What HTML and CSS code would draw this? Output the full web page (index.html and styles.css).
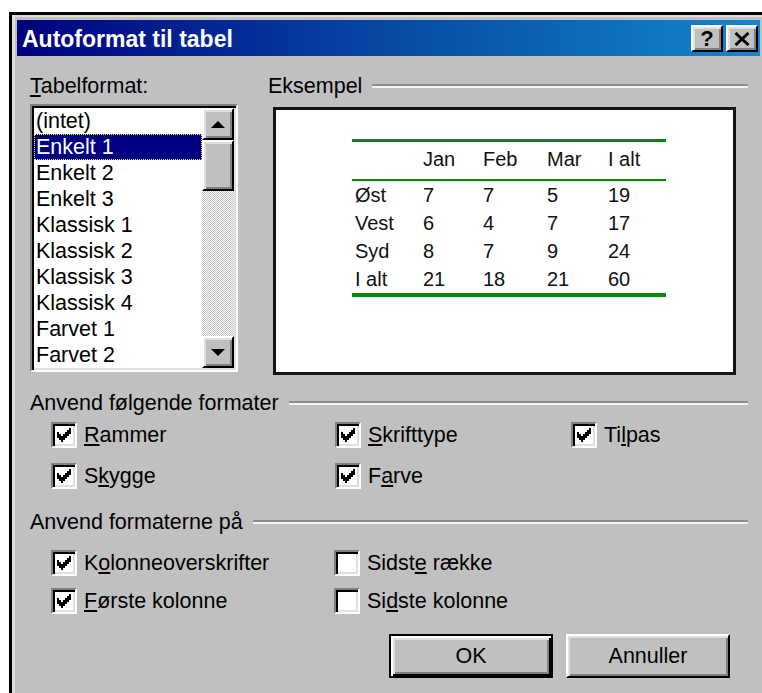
FILE: index.html
```html
<!DOCTYPE html>
<html lang="da">
<head>
<meta charset="utf-8">
<title>Autoformat til tabel</title>
<link rel="stylesheet" href="styles.css">
</head>
<body>
<div class="window">
  <div class="frame">
    <div class="titlebar">
      <span class="title">Autoformat til tabel</span>
      <div class="title-buttons">
        <button class="tbtn raised help" type="button">?</button>
        <button class="tbtn raised close" type="button">
          <svg width="16" height="14" viewBox="0 0 16 14"><path d="M1.5 1 L14.5 13 M14.5 1 L1.5 13" stroke="#000" stroke-width="3" fill="none"/></svg>
        </button>
      </div>
    </div>

    <div class="body">
      <div class="top">
        <div class="format-col">
          <div class="label"><u>T</u>abelformat:</div>
          <div class="listbox sunken">
            <ul class="items">
              <li>(intet)</li>
              <li class="selected">Enkelt 1</li>
              <li>Enkelt 2</li>
              <li>Enkelt 3</li>
              <li>Klassisk 1</li>
              <li>Klassisk 2</li>
              <li>Klassisk 3</li>
              <li>Klassisk 4</li>
              <li>Farvet 1</li>
              <li>Farvet 2</li>
            </ul>
            <div class="scrollbar">
              <div class="sb-btn raised">
                <svg width="14" height="7" viewBox="0 0 14 7"><polygon points="7,0 14,7 0,7" fill="#000"/></svg>
              </div>
              <div class="sb-thumb raised"></div>
              <div class="sb-track"></div>
              <div class="sb-btn raised">
                <svg width="14" height="7" viewBox="0 0 14 7"><polygon points="0,0 14,0 7,7" fill="#000"/></svg>
              </div>
            </div>
          </div>
        </div>

        <div class="preview-col">
          <div class="group-head"><span>Eksempel</span><span class="rule"></span></div>
          <div class="preview">
            <div class="sample">
              <div class="srow head"><span></span><span>Jan</span><span>Feb</span><span>Mar</span><span>I alt</span></div>
              <div class="srow"><span>Øst</span><span>7</span><span>7</span><span>5</span><span>19</span></div>
              <div class="srow"><span>Vest</span><span>6</span><span>4</span><span>7</span><span>17</span></div>
              <div class="srow"><span>Syd</span><span>8</span><span>7</span><span>9</span><span>24</span></div>
              <div class="srow"><span>I alt</span><span>21</span><span>18</span><span>21</span><span>60</span></div>
            </div>
          </div>
        </div>
      </div>

      <div class="group-head section formats-head"><span>Anvend følgende formater</span><span class="rule"></span></div>
      <div class="checks formats">
        <label class="check"><span class="cb on"><svg width="18" height="18" viewBox="0 0 9 9" shape-rendering="crispEdges"><path d="M1 3h1v3H1z M2 4h1v3H2z M3 5h1v3H3z M4 4h1v3H4z M5 3h1v3H5z M6 2h1v3H6z M7 1h1v3H7z" fill="#000"/></svg></span><span><u>R</u>ammer</span></label>
        <label class="check"><span class="cb on"><svg width="18" height="18" viewBox="0 0 9 9" shape-rendering="crispEdges"><path d="M1 3h1v3H1z M2 4h1v3H2z M3 5h1v3H3z M4 4h1v3H4z M5 3h1v3H5z M6 2h1v3H6z M7 1h1v3H7z" fill="#000"/></svg></span><span><u>S</u>krifttype</span></label>
        <label class="check"><span class="cb on"><svg width="18" height="18" viewBox="0 0 9 9" shape-rendering="crispEdges"><path d="M1 3h1v3H1z M2 4h1v3H2z M3 5h1v3H3z M4 4h1v3H4z M5 3h1v3H5z M6 2h1v3H6z M7 1h1v3H7z" fill="#000"/></svg></span><span>Ti<u>l</u>pas</span></label>
        <label class="check"><span class="cb on"><svg width="18" height="18" viewBox="0 0 9 9" shape-rendering="crispEdges"><path d="M1 3h1v3H1z M2 4h1v3H2z M3 5h1v3H3z M4 4h1v3H4z M5 3h1v3H5z M6 2h1v3H6z M7 1h1v3H7z" fill="#000"/></svg></span><span>S<u>k</u>ygge</span></label>
        <label class="check"><span class="cb on"><svg width="18" height="18" viewBox="0 0 9 9" shape-rendering="crispEdges"><path d="M1 3h1v3H1z M2 4h1v3H2z M3 5h1v3H3z M4 4h1v3H4z M5 3h1v3H5z M6 2h1v3H6z M7 1h1v3H7z" fill="#000"/></svg></span><span>F<u>a</u>rve</span></label>
      </div>

      <div class="group-head section apply-head"><span>Anvend formaterne på</span><span class="rule"></span></div>
      <div class="checks apply">
        <label class="check"><span class="cb on"><svg width="18" height="18" viewBox="0 0 9 9" shape-rendering="crispEdges"><path d="M1 3h1v3H1z M2 4h1v3H2z M3 5h1v3H3z M4 4h1v3H4z M5 3h1v3H5z M6 2h1v3H6z M7 1h1v3H7z" fill="#000"/></svg></span><span>K<u>o</u>lonneoverskrifter</span></label>
        <label class="check"><span class="cb"></span><span>Sidst<u>e</u> række</span></label>
        <label class="check"><span class="cb on"><svg width="18" height="18" viewBox="0 0 9 9" shape-rendering="crispEdges"><path d="M1 3h1v3H1z M2 4h1v3H2z M3 5h1v3H3z M4 4h1v3H4z M5 3h1v3H5z M6 2h1v3H6z M7 1h1v3H7z" fill="#000"/></svg></span><span><u>F</u>ørste kolonne</span></label>
        <label class="check"><span class="cb"></span><span>Si<u>d</u>ste kolonne</span></label>
      </div>

      <div class="actions">
        <button class="btn default" type="button">OK</button>
        <button class="btn raised" type="button">Annuller</button>
      </div>
    </div>
  </div>
</div>
</body>
</html>
```

FILE: styles.css
```css
html, body {
  margin: 0;
  height: 100%;
  overflow: hidden;
  background: #fff;
}

body {
  font-family: "Liberation Sans", Arial, sans-serif;
  font-size: 21.5px;
  line-height: 26px;
  color: #000;
}

u { text-decoration-thickness: 2px; text-underline-offset: 2px; }

/* Window chrome */
.window {
  margin: 12px 0 0 9px;
  width: 753px;
  height: 700px;
  box-sizing: border-box;
  border-left: 3px solid #000;
  border-top: 3px solid #000;
}

.frame {
  height: 100%;
  box-sizing: border-box;
  background: #c0c0c0;
  border-left: 3px solid #dfdfdf;
  border-top: 2px solid #dfdfdf;
  padding: 3px 2px 0 2px;
}

.titlebar {
  display: flex;
  align-items: flex-start;
  height: 36px;
  box-sizing: border-box;
  padding: 5px 2px 0 5px;
  background: linear-gradient(to right, #000080 0%, #0850a8 55%, #1286d2 100%);
}

.title {
  margin-top: 1px;
  color: #fff;
  font-weight: bold;
  font-size: 23px;
  line-height: 26px;
  white-space: nowrap;
}

.title-buttons {
  margin-left: auto;
  display: flex;
  gap: 3px;
}

/* 3D bevels */
.raised {
  background: #c0c0c0;
  border: 2px solid;
  border-color: #fff #000 #000 #fff;
  box-shadow: inset 2px 2px #dfdfdf, inset -2px -2px #808080;
}

.sunken {
  border: 2px solid;
  border-color: #808080 #fff #fff #808080;
  box-shadow: inset 2px 2px #000, inset -2px -2px #dfdfdf;
}

.tbtn {
  width: 32px;
  height: 27px;
  box-sizing: border-box;
  padding: 0;
  margin: 0;
  display: flex;
  align-items: center;
  justify-content: center;
  font-family: inherit;
  color: #000;
}

.help {
  font-weight: bold;
  font-size: 22px;
  line-height: 20px;
}

/* Dialog body */
.body {
  padding: 17px 12px 0 13px;
}

.top {
  display: flex;
  gap: 30px;
}

.format-col {
  width: 208px;
  flex: none;
}

.label {
  height: 26px;
  white-space: nowrap;
}

.listbox {
  margin-top: 5px;
  width: 208px;
  height: 268px;
  box-sizing: border-box;
  padding: 2px;
  background: #fff;
  display: flex;
}

.items {
  flex: 1;
  margin: 0;
  padding: 0;
  list-style: none;
  overflow: hidden;
}

.items li {
  height: 26px;
  padding-left: 2px;
  white-space: nowrap;
}

.items li.selected {
  background: #000080;
  color: #fff;
  outline: 1px dotted #f0f060;
  outline-offset: -1px;
}

.scrollbar {
  width: 32px;
  display: flex;
  flex-direction: column;
}

.sb-btn {
  height: 32px;
  box-sizing: border-box;
  display: flex;
  align-items: center;
  justify-content: center;
}

.sb-btn svg { display: block; }

.sb-thumb {
  height: 51px;
  box-sizing: border-box;
}

.sb-track {
  flex: 1;
  background: repeating-conic-gradient(#c0c0c0 0% 25%, #fff 0% 50%) 0 0 / 2px 2px;
}

.preview-col {
  flex: 1;
}

.group-head {
  display: flex;
  align-items: center;
  gap: 10px;
  height: 26px;
  white-space: nowrap;
}

.rule {
  flex: 1;
  height: 0;
  border-top: 2px solid #8c8c8c;
  border-bottom: 2px solid #f4f4f4;
}

.preview {
  margin: 8px 0 0 5px;
  width: 463px;
  height: 268px;
  box-sizing: border-box;
  background: #fff;
  border: 3px solid #141414;
}

/* Sample table drawn in the preview */
.sample {
  margin: 29px 0 0 76px;
  width: 314px;
  font-size: 20px;
  line-height: 28px;
  color: #111;
  border-top: 3px solid #058a05;
  border-bottom: 4px solid #058a05;
}

.srow {
  display: grid;
  grid-template-columns: 68px 60px 64px 61px 61px;
}

.srow span {
  padding-left: 3px;
  white-space: nowrap;
}

.srow.head {
  padding: 3px 0 6px;
  border-bottom: 2px solid #058a05;
}

/* Option groups */
.section { margin-top: 15px; }
.apply-head { margin-top: 20px; }

.checks {
  display: grid;
  grid-template-columns: 284px 236px auto;
  padding-left: 21px;
  margin-top: 6px;
  row-gap: 15px;
}

.checks.apply {
  grid-template-columns: 283px auto;
  margin-top: 15px;
  row-gap: 12px;
}

.check {
  display: flex;
  align-items: center;
  gap: 7px;
  white-space: nowrap;
}

.cb {
  width: 26px;
  height: 26px;
  box-sizing: border-box;
  background: #fff;
  border: 2px solid;
  border-color: #808080 #fff #fff #808080;
  box-shadow: inset 2px 2px #000, inset -2px -2px #dfdfdf;
  display: flex;
  align-items: center;
  justify-content: center;
  flex: none;
}

.cb svg { display: block; }

/* Command buttons */
.actions {
  margin-top: 20px;
  display: flex;
  justify-content: flex-end;
  gap: 13px;
  padding-right: 18px;
}

.btn {
  width: 164px;
  height: 44px;
  box-sizing: border-box;
  padding: 0;
  margin: 0;
  font-family: inherit;
  font-size: 21.5px;
  color: #000;
}

.btn.default {
  background: #c0c0c0;
  border: 2px solid #000;
  box-shadow: inset 2px 2px #fff, inset -2px -2px #000, inset 4px 4px #dfdfdf, inset -4px -4px #808080;
}
```
